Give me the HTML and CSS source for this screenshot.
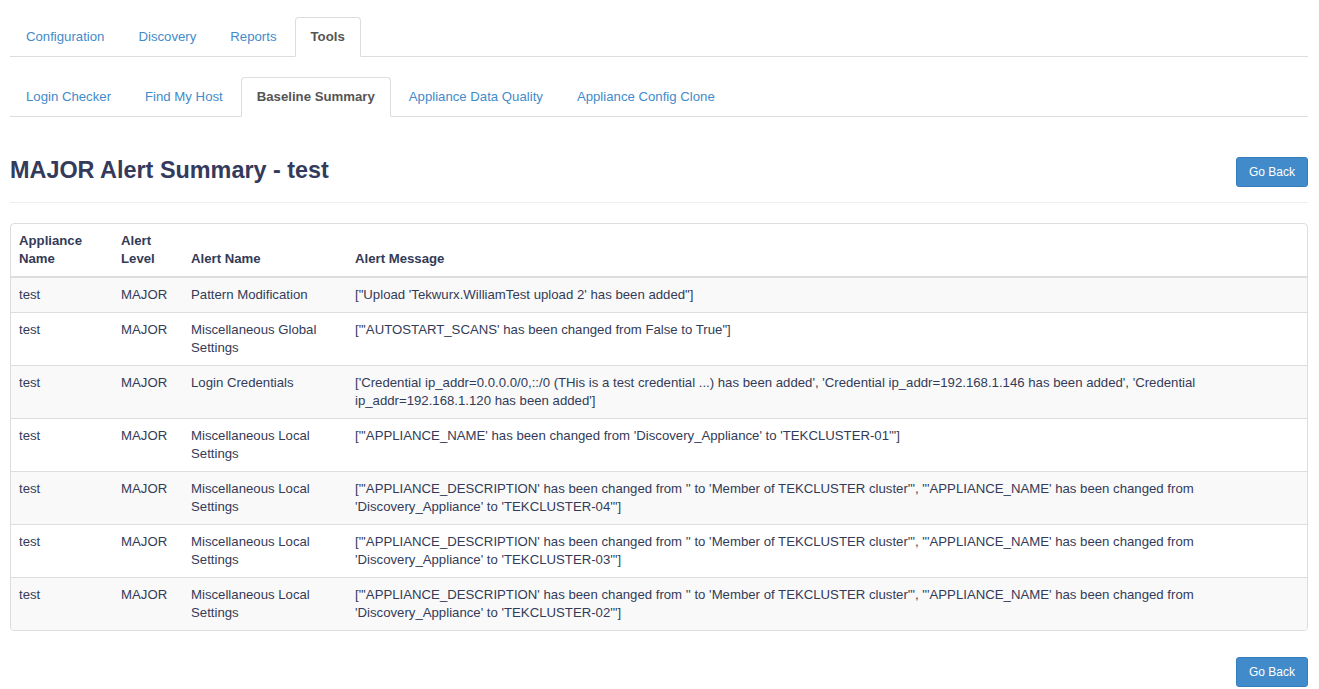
FILE: index.html
```html
<!DOCTYPE html>
<html>
<head>
<meta charset="utf-8">
<title>MAJOR Alert Summary - test</title>
<link rel="stylesheet" href="styles.css">
</head>
<body>
<div class="container">
  <ul class="tabs tabs-main">
    <li><a href="#">Configuration</a></li>
    <li><a href="#">Discovery</a></li>
    <li><a href="#">Reports</a></li>
    <li class="active"><a href="#">Tools</a></li>
  </ul>
  <ul class="tabs tabs-sub">
    <li><a href="#">Login Checker</a></li>
    <li><a href="#">Find My Host</a></li>
    <li class="active"><a href="#">Baseline Summary</a></li>
    <li><a href="#">Appliance Data Quality</a></li>
    <li><a href="#">Appliance Config Clone</a></li>
  </ul>

  <div class="page-header">
    <h3 class="title">MAJOR Alert Summary - test</h3>
    <a href="#" class="btn">Go Back</a>
  </div>

  <div class="panel">
    <table class="alerts">
      <colgroup>
        <col class="c-appl">
        <col class="c-level">
        <col class="c-name">
        <col class="c-msg">
      </colgroup>
      <thead>
        <tr>
          <th>Appliance Name</th>
          <th>Alert Level</th>
          <th>Alert Name</th>
          <th>Alert Message</th>
        </tr>
      </thead>
      <tbody>
        <tr>
          <td>test</td><td>MAJOR</td><td>Pattern Modification</td>
          <td>["Upload 'Tekwurx.WilliamTest upload 2' has been added"]</td>
        </tr>
        <tr>
          <td>test</td><td>MAJOR</td><td>Miscellaneous Global Settings</td>
          <td>["'AUTOSTART_SCANS' has been changed from False to True"]</td>
        </tr>
        <tr>
          <td>test</td><td>MAJOR</td><td>Login Credentials</td>
          <td>['Credential ip_addr=0.0.0.0/0,::/0 (THis is a test credential ...) has been added', 'Credential ip_addr=192.168.1.146 has been added', 'Credential ip_addr=192.168.1.120 has been added']</td>
        </tr>
        <tr>
          <td>test</td><td>MAJOR</td><td>Miscellaneous Local Settings</td>
          <td>["'APPLIANCE_NAME' has been changed from 'Discovery_Appliance' to 'TEKCLUSTER-01'"]</td>
        </tr>
        <tr>
          <td>test</td><td>MAJOR</td><td>Miscellaneous Local Settings</td>
          <td>["'APPLIANCE_DESCRIPTION' has been changed from '' to 'Member of TEKCLUSTER cluster'", "'APPLIANCE_NAME' has been changed from 'Discovery_Appliance' to 'TEKCLUSTER-04'"]</td>
        </tr>
        <tr>
          <td>test</td><td>MAJOR</td><td>Miscellaneous Local Settings</td>
          <td>["'APPLIANCE_DESCRIPTION' has been changed from '' to 'Member of TEKCLUSTER cluster'", "'APPLIANCE_NAME' has been changed from 'Discovery_Appliance' to 'TEKCLUSTER-03'"]</td>
        </tr>
        <tr>
          <td>test</td><td>MAJOR</td><td>Miscellaneous Local Settings</td>
          <td>["'APPLIANCE_DESCRIPTION' has been changed from '' to 'Member of TEKCLUSTER cluster'", "'APPLIANCE_NAME' has been changed from 'Discovery_Appliance' to 'TEKCLUSTER-02'"]</td>
        </tr>
      </tbody>
    </table>
  </div>

  <div class="footer">
    <a href="#" class="btn">Go Back</a>
  </div>
</div>
</body>
</html>
```

FILE: styles.css
```css
* { box-sizing: border-box; }

html, body {
  margin: 0;
  padding: 0;
  background: #fff;
}

body {
  font-family: "Liberation Sans", Arial, Helvetica, sans-serif;
  font-size: 13.2px;
  line-height: 18px;
  color: #333b58;
}

.container {
  padding: 0 11px 2px 10px;
}

.tabs {
  list-style: none;
  margin: 0;
  padding: 0;
  display: flex;
  border-bottom: 1px solid #ddd;
}

.tabs-main { margin-top: 17px; }
.tabs-sub { margin-top: 20px; }

.tabs li {
  margin-bottom: -1px;
  margin-right: 2px;
}

.tabs a {
  display: block;
  padding: 10px 15px;
  line-height: 18px;
  border: 1px solid transparent;
  border-radius: 4px 4px 0 0;
  color: #428bca;
  text-decoration: none;
}

.tabs li.active a {
  color: #555;
  font-weight: bold;
  background: #fff;
  border-color: #ddd;
  border-bottom-color: transparent;
}

.page-header {
  display: flex;
  justify-content: space-between;
  align-items: flex-start;
  margin-top: 40px;
  padding-bottom: 15px;
  border-bottom: 1px solid #eee;
}

.title {
  margin: 0;
  font-size: 23.4px;
  line-height: 26px;
  font-weight: bold;
  color: #343a5b;
}

.btn {
  display: inline-block;
  padding: 5px 12px;
  font-size: 12px;
  line-height: 18px;
  color: #fff;
  background: #428bca;
  border: 1px solid #357ebd;
  border-radius: 3px;
  text-decoration: none;
}

.panel {
  margin-top: 20px;
  border: 1px solid #ddd;
  border-radius: 4px;
  overflow: hidden;
  background: #fff;
}

.alerts {
  width: 100%;
  border-collapse: collapse;
  table-layout: fixed;
}

.c-appl { width: 102px; }
.c-level { width: 70px; }
.c-name { width: 164px; }

.alerts th,
.alerts td {
  padding: 8px;
  text-align: left;
  vertical-align: top;
  line-height: 18px;
}

.alerts th {
  vertical-align: bottom;
  font-weight: bold;
  border-bottom: 2px solid #ddd;
}

.alerts tbody td {
  border-top: 1px solid #ddd;
}

.alerts tbody tr:first-child td {
  border-top: 0;
}

.alerts tbody tr:nth-child(odd) td {
  background: #f9f9f9;
}

.footer {
  display: flex;
  justify-content: flex-end;
  margin-top: 26px;
}
```
